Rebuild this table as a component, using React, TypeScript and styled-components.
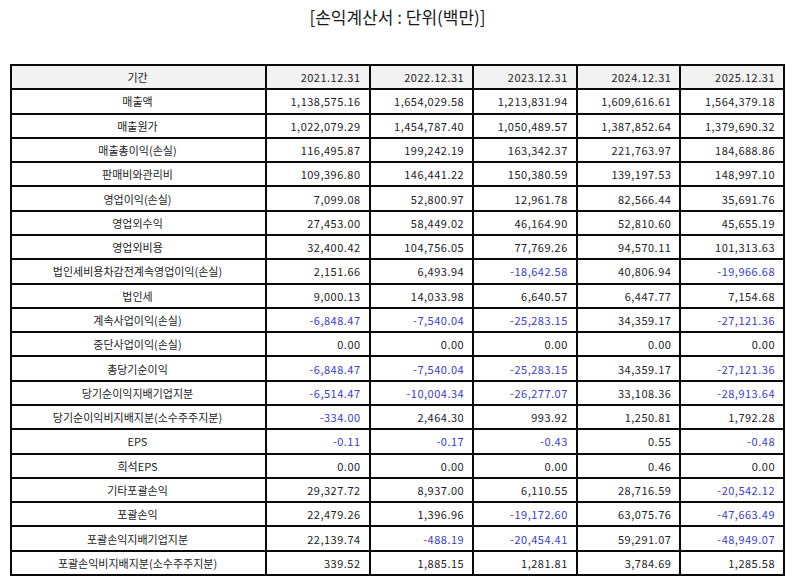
import styled, { createGlobalStyle } from "styled-components";

const GlobalStyle = createGlobalStyle`
  body {
    margin: 0;
    background: #ffffff;
    font-family: "Noto Sans CJK KR", "Noto Sans", sans-serif;
    color: #222222;
  }
`;

const Page = styled.div`
  width: 794px;
  height: 586px;
  padding: 0 9px 0 10px;
  box-sizing: border-box;
`;

const Title = styled.h1`
  margin: 5px 0 0;
  height: 24px;
  font-size: 17px;
  line-height: 24px;
  font-weight: 400;
  text-align: center;
  color: #1a1a1a;
`;

const Table = styled.table`
  margin-top: 35px;
  width: 775px;
  table-layout: fixed;
  border-collapse: separate;
  border-spacing: 0;
  border: 1px solid #0a0a0a;
  font-size: 11px;
`;

const LabelCol = styled.col`
  width: 255px;
`;

const Cell = styled.td<{ $head?: boolean; $num?: boolean; $neg?: boolean }>`
  border: 1px solid #0a0a0a;
  padding: 3.2px 8px 3.1px 6px;
  line-height: 16px;
  font-weight: 400;
  white-space: nowrap;
  letter-spacing: ${({ $num }) => ($num ? "0.5px" : "0")};
  text-align: ${({ $num }) => ($num ? "right" : "center")};
  background: ${({ $head }) => ($head ? "#f2f2f2" : "#ffffff")};
  color: ${({ $neg }) => ($neg ? "#3b3bcc" : "#222222")};
`;

const periods = ["2021.12.31", "2022.12.31", "2023.12.31", "2024.12.31", "2025.12.31"];

const rows: [string, string[]][] = [
  ["매출액", ["1,138,575.16", "1,654,029.58", "1,213,831.94", "1,609,616.61", "1,564,379.18"]],
  ["매출원가", ["1,022,079.29", "1,454,787.40", "1,050,489.57", "1,387,852.64", "1,379,690.32"]],
  ["매출총이익(손실)", ["116,495.87", "199,242.19", "163,342.37", "221,763.97", "184,688.86"]],
  ["판매비와관리비", ["109,396.80", "146,441.22", "150,380.59", "139,197.53", "148,997.10"]],
  ["영업이익(손실)", ["7,099.08", "52,800.97", "12,961.78", "82,566.44", "35,691.76"]],
  ["영업외수익", ["27,453.00", "58,449.02", "46,164.90", "52,810.60", "45,655.19"]],
  ["영업외비용", ["32,400.42", "104,756.05", "77,769.26", "94,570.11", "101,313.63"]],
  ["법인세비용차감전계속영업이익(손실)", ["2,151.66", "6,493.94", "-18,642.58", "40,806.94", "-19,966.68"]],
  ["법인세", ["9,000.13", "14,033.98", "6,640.57", "6,447.77", "7,154.68"]],
  ["계속사업이익(손실)", ["-6,848.47", "-7,540.04", "-25,283.15", "34,359.17", "-27,121.36"]],
  ["중단사업이익(손실)", ["0.00", "0.00", "0.00", "0.00", "0.00"]],
  ["총당기순이익", ["-6,848.47", "-7,540.04", "-25,283.15", "34,359.17", "-27,121.36"]],
  ["당기순이익지배기업지분", ["-6,514.47", "-10,004.34", "-26,277.07", "33,108.36", "-28,913.64"]],
  ["당기순이익비지배지분(소수주주지분)", ["-334.00", "2,464.30", "993.92", "1,250.81", "1,792.28"]],
  ["EPS", ["-0.11", "-0.17", "-0.43", "0.55", "-0.48"]],
  ["희석EPS", ["0.00", "0.00", "0.00", "0.46", "0.00"]],
  ["기타포괄손익", ["29,327.72", "8,937.00", "6,110.55", "28,716.59", "-20,542.12"]],
  ["포괄손익", ["22,479.26", "1,396.96", "-19,172.60", "63,075.76", "-47,663.49"]],
  ["포괄손익지배기업지분", ["22,139.74", "-488.19", "-20,454.41", "59,291.07", "-48,949.07"]],
  ["포괄손익비지배지분(소수주주지분)", ["339.52", "1,885.15", "1,281.81", "3,784.69", "1,285.58"]],
];

export default function App() {
  return (
    <>
      <GlobalStyle />
      <Page>
        <Title>[손익계산서 : 단위(백만)]</Title>
        <Table>
          <colgroup>
            <LabelCol />
            {periods.map((p) => (
              <col key={p} />
            ))}
          </colgroup>
          <thead>
            <tr>
              <Cell as="th" $head>
                기간
              </Cell>
              {periods.map((p) => (
                <Cell as="th" key={p} $head $num>
                  {p}
                </Cell>
              ))}
            </tr>
          </thead>
          <tbody>
            {rows.map(([label, values]) => (
              <tr key={label}>
                <Cell>{label}</Cell>
                {values.map((v, i) => (
                  <Cell key={i} $num $neg={v.startsWith("-")}>
                    {v}
                  </Cell>
                ))}
              </tr>
            ))}
          </tbody>
        </Table>
      </Page>
    </>
  );
}
